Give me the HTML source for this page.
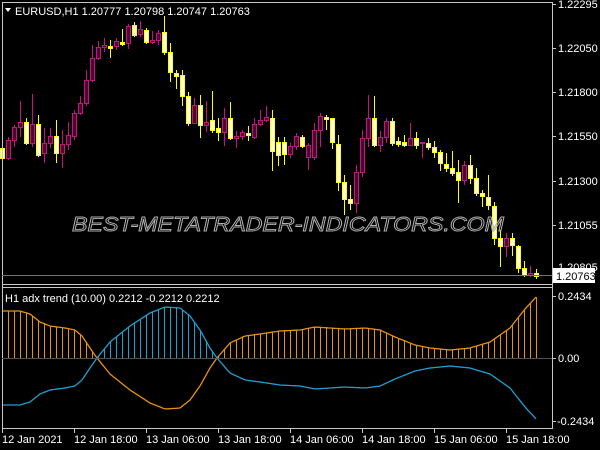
<!DOCTYPE html>
<html><head><meta charset="utf-8"><style>
html,body{margin:0;padding:0;background:#000;width:600px;height:450px;overflow:hidden}
svg{display:block}
text{font-family:"Liberation Sans",sans-serif;font-size:11px;fill:#fff}
</style></head><body>
<svg id="s" width="600" height="450" viewBox="0 0 600 450">
<rect width="600" height="450" fill="#000"/>
<g id="g"></g>
<line x1="2.5" y1="2" x2="2.5" y2="432" stroke="#c8c8c8"/>
<line x1="2" y1="2.5" x2="553" y2="2.5" stroke="#c8c8c8"/>
<line x1="552.5" y1="2" x2="552.5" y2="429" stroke="#c8c8c8"/>
<line x1="2" y1="284.5" x2="553" y2="284.5" stroke="#c8c8c8"/>
<line x1="2" y1="287.5" x2="553" y2="287.5" stroke="#c8c8c8"/>
<line x1="2" y1="428.5" x2="553" y2="428.5" stroke="#c8c8c8"/>
<line x1="2" y1="275.5" x2="552" y2="275.5" stroke="#6e7378"/>
<line x1="2" y1="358.5" x2="552" y2="358.5" stroke="#505050"/>
<text x="72" y="231" style="font-size:20px;font-style:italic;fill:none;stroke:#b0b0b0;stroke-width:0.9" textLength="432" lengthAdjust="spacingAndGlyphs">BEST-METATRADER-INDICATORS.COM</text>
<g>
<line x1="552" y1="4.5" x2="556" y2="4.5" stroke="#c8c8c8"/><text x="558" y="8">1.22295</text>
<line x1="552" y1="48.5" x2="556" y2="48.5" stroke="#c8c8c8"/><text x="558" y="52">1.22050</text>
<line x1="552" y1="92.5" x2="556" y2="92.5" stroke="#c8c8c8"/><text x="558" y="96">1.21800</text>
<line x1="552" y1="136.5" x2="556" y2="136.5" stroke="#c8c8c8"/><text x="558" y="140">1.21550</text>
<line x1="552" y1="181.5" x2="556" y2="181.5" stroke="#c8c8c8"/><text x="558" y="185">1.21300</text>
<line x1="552" y1="225.5" x2="556" y2="225.5" stroke="#c8c8c8"/><text x="558" y="229">1.21055</text>
<text x="558" y="271">1.20805</text>
<rect x="553" y="268" width="42" height="15" fill="#fff"/>
<text x="556" y="280" style="fill:#000">1.20763</text>
<line x1="552" y1="296.5" x2="556" y2="296.5" stroke="#c8c8c8"/><text x="558" y="300">0.2434</text>
<line x1="552" y1="358.5" x2="556" y2="358.5" stroke="#c8c8c8"/><text x="558" y="362">0.00</text>
<line x1="552" y1="421.5" x2="556" y2="421.5" stroke="#c8c8c8"/><text x="557" y="425">-0.2434</text>
</g>
<g stroke="#c8c8c8">
<line x1="2.5" y1="428" x2="2.5" y2="433"/><line x1="74.5" y1="428" x2="74.5" y2="433"/>
<line x1="146.5" y1="428" x2="146.5" y2="433"/><line x1="218.5" y1="428" x2="218.5" y2="433"/>
<line x1="290.5" y1="428" x2="290.5" y2="433"/><line x1="362.5" y1="428" x2="362.5" y2="433"/>
<line x1="434.5" y1="428" x2="434.5" y2="433"/><line x1="506.5" y1="428" x2="506.5" y2="433"/>
</g>
<text x="2" y="443">12 Jan 2021</text>
<text x="74" y="443">12 Jan 18:00</text>
<text x="146" y="443">13 Jan 06:00</text>
<text x="218" y="443">13 Jan 18:00</text>
<text x="290" y="443">14 Jan 06:00</text>
<text x="362" y="443">14 Jan 18:00</text>
<text x="434" y="443">15 Jan 06:00</text>
<text x="506" y="443">15 Jan 18:00</text>
<path d="M5 8 L11 8 L8 12 Z" fill="#fff"/>
<text x="15" y="15">EURUSD,H1  1.20777 1.20798 1.20747 1.20763</text>
<text x="5" y="302">H1 adx trend (10.00) 0.2212 -0.2212 0.2212</text>
</svg>
<script>
var C=[
['Y',148,158,140,165],['M',140,158,137,160],['M',127,140,125,147],['M',122,127,101,137],['Y',122,143,118,145],
['M',124,143,94,147],['Y',124,155,115,157],['M',143,153,128,163],['M',136,143,128,148],['Y',136,153,120,163],
['M',144,153,130,168],['M',135,144,122,150],['M',113,136,110,140],['M',103,113,96,115],['M',80,103,70,106],
['M',58,80,45,82],['M',47,58,41,60],['M',45,47,38,52],['Y',46,48,40,58],['M',41,46,38,50],
['Y',42,44,29,46],['M',26,43,24,49],['Y',25,35,22,37],['M',29,34,21,37],['Y',30,42,28,44],
['M',40,42,31,44],['M',33,40,30,45],['Y',32,52,16,55],['Y',52,72,43,82],['Y',73,76,70,89],
['Y',75,96,70,106],['Y',96,123,92,126],['M',105,123,98,124],['Y',105,125,95,138],['M',122,125,101,132],
['Y',120,130,91,133],['Y',128,132,118,141],['M',118,132,108,146],['Y',118,138,102,140],['M',136,138,131,148],
['M',132,136,130,140],['Y',133,135,126,141],['M',124,137,118,139],['M',120,124,110,126],['M',117,120,106,122],
['Y',118,151,110,171],['Y',142,155,137,166],
['Y',142,154,137,165],['M',146,154,143,158],['M',136,146,133,150],['Y',137,146,135,148],['M',145,157,143,170],
['M',130,157,123,160],['M',116,130,113,147],['Y',117,119,115,130],['Y',118,142,118,149],['Y',144,182,135,191],
['Y',182,199,175,215],['Y',199,203,185,210],['M',172,203,165,213],['M',138,172,130,177],['M',118,138,95,147],
['Y',118,145,96,147],['M',137,145,131,152],['M',121,137,118,143],['Y',121,143,118,146],['Y',141,144,137,147],
['Y',142,145,135,147],['M',138,145,123,146],['Y',138,145,132,149],['M',142,143,142,158],['Y',143,147,138,150],
['Y',147,152,141,158],['Y',152,163,150,171],['Y',164,168,153,172],['Y',168,173,151,176],['Y',172,180,160,203],
['M',165,180,161,185],['Y',165,178,155,184],['Y',178,193,168,196],['Y',193,196,190,207],['Y',197,205,175,210],
['Y',206,238,202,245],['Y',238,246,230,267],['M',238,246,233,257],['Y',238,245,233,256],['Y',246,268,245,273],
['Y',268,275,261,277],['M',273,275,266,277],['Y',273,276,269,279]];
var s='';
C.forEach(function(c,i){var x=2+6*i+0.5;var m=c[0]=='M';var col=m?'#c8127f':'#ffff00';
s+='<line x1="'+x+'" y1="'+c[3]+'" x2="'+x+'" y2="'+c[4]+'" stroke="'+col+'"/>';
var h=Math.max(c[2]-c[1],1);
s+='<rect x="'+(x-2)+'" y="'+(c[1]+0.5)+'" width="4" height="'+h+'" fill="'+(m?'#4a0830':'#ffffd8')+'" stroke="'+col+'"/>';});
var K=[[2,47],[20,47],[30,44],[40,36],[50,32],[65,30],[75,28],[82,22],[90,10],[97,0],[110,-16],[130,-32],[150,-45],[165,-51],[180,-50],[190,-42],[200,-28],[210,-10],[217,0],[230,15],[245,22],[260,24],[280,27],[300,28],[315,31],[330,30],[345,29],[365,30],[380,28],[395,21],[415,13],[430,10],[450,8],[470,10],[490,16],[510,30],[525,49],[537,62]];
function d(x){for(var i=0;i<K.length-1;i++){if(x<=K[i+1][0]){var t=(x-K[i][0])/(K[i+1][0]-K[i][0]);return K[i][1]+t*(K[i+1][1]-K[i][1]);}}return K[K.length-1][1];}
var po='',pb='';
for(var i=0;i<90;i++){var x=2+6*i+0.5;var v=d(2+6*i);
var up=v>=0;s+='<line x1="'+x+'" y1="358" x2="'+x+'" y2="'+(358-Math.abs(v))+'" stroke="'+(up?'#e8920c':'#1ea0d0')+'"/>';}
for(var x=2;x<=537;x+=2){var v=d(x);po+=x+','+(358-v).toFixed(1)+' ';pb+=x+','+(358+v).toFixed(1)+' ';}
s+='<polyline points="'+po+'" fill="none" stroke="#e8920c" stroke-width="1.3"/>';
s+='<polyline points="'+pb+'" fill="none" stroke="#1ea0d0" stroke-width="1.3"/>';
document.getElementById('g').innerHTML=s;
</script>
</body></html>
